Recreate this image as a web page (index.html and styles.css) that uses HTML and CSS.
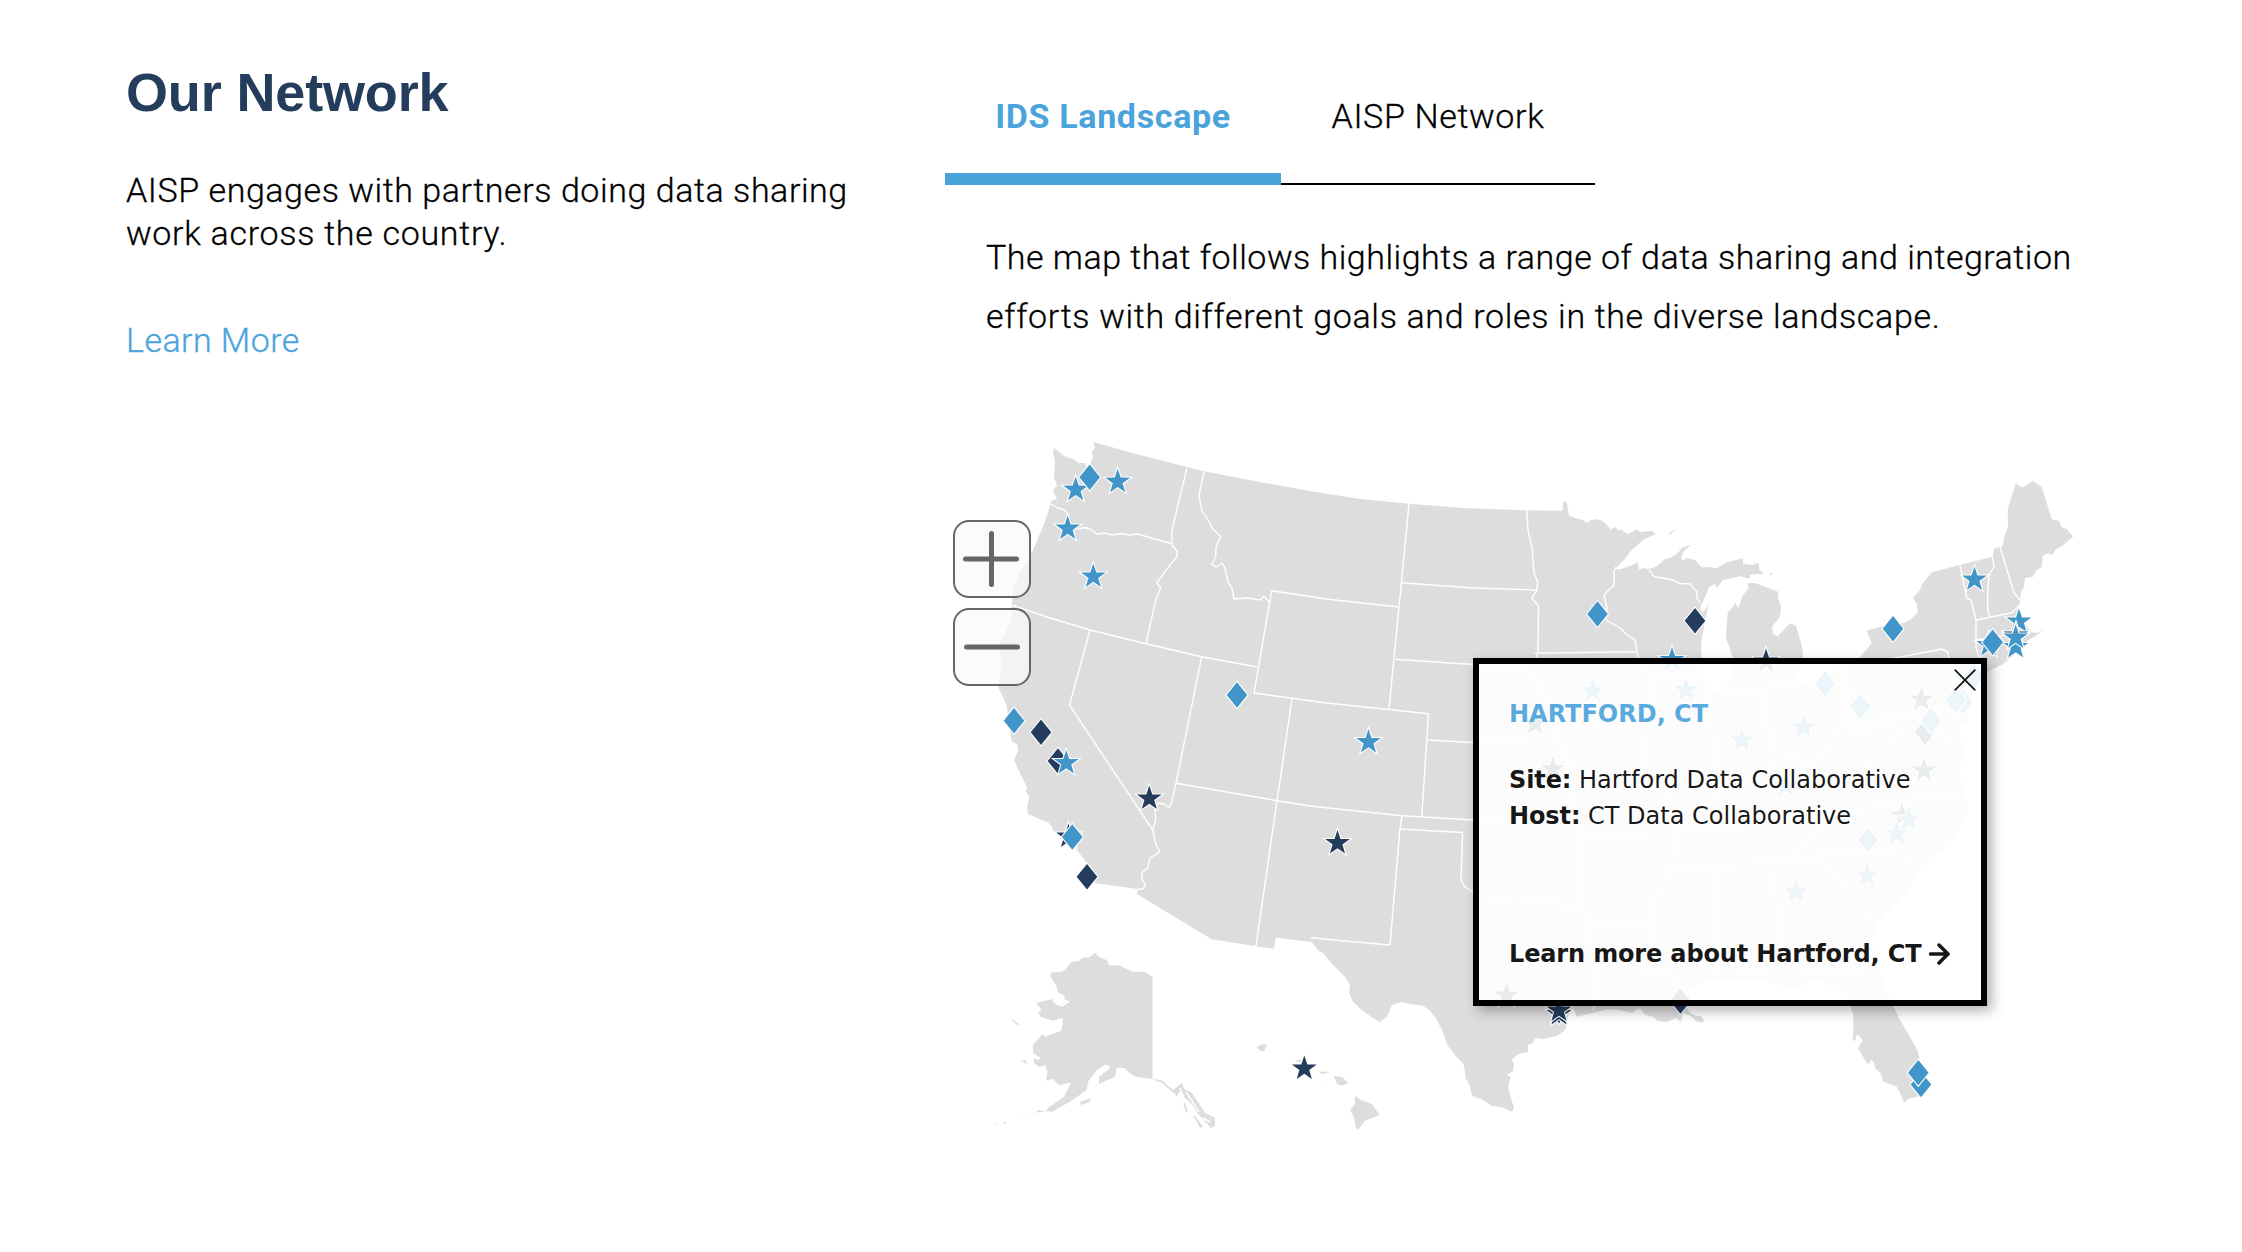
FILE: index.html
```html
<!DOCTYPE html>
<html lang="en">
<head>
  <meta charset="UTF-8" />
  <meta name="viewport" content="width=device-width, initial-scale=1.0"/>
  <title>Our Network</title>
  <link rel="stylesheet" href="styles.css">
</head>
<body>

<section class="network">
  <!-- Intro -->
  <div class="intro">
    <h2>Our Network</h2>
    <p><span class="line line-1">AISP engages with partners doing data sharing</span><br><span class="line line-2">work across the country.</span></p>
    <a class="learn-more" href="#">Learn More</a>
  </div>

  <!-- Tabs + map -->
  <div class="landscape">
    <div class="tabs">
      <a class="tab active" href="#"><span>IDS Landscape</span></a>
      <a class="tab" href="#"><span>AISP Network</span></a>
    </div>
    <p class="map-text"><span class="line line-3">The map that follows highlights a range of data sharing and integration</span><br><span class="line line-4">efforts with different goals and roles in the diverse landscape.</span></p>

    <div class="map">
      <svg class="map-svg" viewBox="945 420 1150 730" width="1150" height="730">
        <defs>
          <path id="star" d="M0-13 L3-4.1 L12.4-4 L4.9 1.6 L7.6 10.5 L0 5.2 L-7.6 10.5 L-4.9 1.6 L-12.4-4 L-3-4.1Z"/>
          <path id="diamond" d="M0-12.8 L10.3 0 L0 12.8 L-10.3 0Z"/>
        </defs>

        <g class="land">
          <!-- Lower 48 -->
          <path d="M1054 448 L1058 451 L1064 456 L1073 459 L1079 463 L1085 463 L1087 469 L1090 470 L1090 464 L1093 457 L1092 452 L1095 447 L1093 442 L1140 455 L1187 467 L1204 471.300 L1260 482 L1310 491 L1360 499 L1409 503.700 L1467 508.300 L1527 510.300 L1562.700 510.700 L1563.300 501 L1566.700 502 L1569 515.700 L1575 518 L1583 520 L1587 522.700 L1591 520 L1597 519.300 L1603 521 L1607 525 L1610.700 529.700 L1615 526.700 L1618 530 L1622 530 L1627 534 L1632 532 L1637 529.300 L1640 532 L1651.700 531 L1656 534 L1649 537 L1643 540 L1631.700 550 L1624 560 L1615 568.700 L1620 569.300 L1630 566 L1638 562.300 L1639 570 L1643 568 L1649 569.300 L1657 566 L1665 559 L1670 558 L1677.700 553.300 L1682 547.700 L1691.700 544.300 L1684 551 L1681 557 L1683 561 L1687 558 L1695 560 L1702 567.500 L1709 567 L1716.700 568.300 L1727 562.300 L1742.700 558.300 L1743.300 564 L1752 565 L1759 562.700 L1759 569.300 L1764 574.300 L1757 574 L1750 575 L1749 579 L1740 576 L1733 578 L1723 580 L1717 588.300 L1715 584 L1709 586.700 L1706 595 L1700 608 L1703 613 L1709 603 L1706.700 613 L1704 626.700 L1701 643 L1701.700 660 L1704 680 L1708 690 L1716.500 693 L1725 687 L1733 672 L1733 657.700 L1725.700 636.700 L1727.700 613 L1732 608 L1735 602.700 L1738.300 608 L1743 595 L1748 589 L1748 583 L1755 583 L1763 586 L1778 591.700 L1778 597 L1781 606.700 L1780 616.700 L1772 626.700 L1773 634 L1778 636 L1790 623.300 L1796 625.700 L1802 646.700 L1803 657.700 L1797 674 L1799 683 L1812 688 L1842 667 L1860 657.300 L1871.700 643.300 L1866.700 630.700 L1887 625 L1900 624 L1910 620 L1917.700 612.700 L1916.700 603.300 L1912.700 598.300 L1920 590 L1922 584 L1931.700 572.300 L1959.300 565 L1992.700 556.700 L1994.300 548.300 L2000 547 L2003 546 L2004.300 536.700 L2008 526.700 L2007.700 510 L2011 498 L2016 483.300 L2021.700 487.500 L2027 485 L2033 481 L2041.700 486.700 L2047 504 L2051.700 519.300 L2059 520.700 L2061.700 527.300 L2067 529.300 L2073 536.700 L2068 541 L2062 546 L2056 549 L2052 555 L2048 553 L2042.700 556 L2041.700 566.700 L2036 571 L2033 576.700 L2025 578.300 L2024 586.700 L2021 592 L2020 601.700 L2018 608 L2022 617 L2028 628 L2030.700 632 L2036.700 633.300 L2043.300 629.300 L2036 636 L2028 640 L2022 649 L2011.700 657 L2003 664 L1987 672 L1975 676 L1972 700 L1966 724 L1958 728 L1964 750 L1959 773 L1966 793 L1968 810 L1956 836.700 L1942 850 L1921.400 866.700 L1904 896.700 L1878 923 L1871.500 940 L1882 980 L1893 1006 L1900 1020 L1909 1035 L1918 1051.700 L1921.700 1073 L1918 1096.700 L1908 1099 L1904 1103 L1902 1097 L1897 1087 L1890 1084 L1883 1081.700 L1880.700 1073 L1875 1068.300 L1874 1062 L1871 1060 L1869 1064 L1866.700 1062.700 L1858 1048.300 L1862.700 1040 L1857 1034 L1855 1041 L1852.700 1040 L1853.500 1024 L1853 1013 L1849 1003 L1832 987 L1818 980 L1791 989 L1770 983 L1749 978 L1715 980 L1697 985 L1687 992 L1685 1006 L1690 1013 L1696.700 1016 L1701 1016 L1704 1020.700 L1701.700 1022.700 L1696 1021 L1691 1016 L1683 1013 L1680.700 1022 L1676.700 1018 L1667 1022 L1657 1021 L1654 1017 L1645 1015 L1640 1008 L1635 1010 L1632.700 1013.300 L1620 1010 L1606.700 1009.300 L1593 1012.700 L1576.700 1016.700 L1574 1010 L1570 1010 L1566.700 1021.700 L1568 1024 L1565 1030 L1556.700 1036 L1541.700 1039 L1535 1038 L1533 1043 L1528 1045 L1528 1052 L1518 1054 L1511.700 1060 L1514 1064 L1513 1071 L1507 1075 L1510.700 1077 L1508 1086.700 L1511 1098 L1514 1108 L1512 1111.700 L1508 1110 L1501.700 1107 L1492 1106 L1481.700 1099.300 L1472 1095.700 L1470 1086.700 L1465.700 1078 L1464 1065 L1455 1055 L1447.300 1045 L1443 1031.700 L1435 1016.700 L1428 1009 L1422.700 1005.700 L1410 1004 L1401.700 1001.700 L1392 1005 L1387 1016.700 L1380 1022 L1373 1018 L1361.700 1010 L1353 1002 L1349 993 L1350 985 L1345 976.700 L1333 965 L1323 953 L1319 951 L1311.700 942 L1275.700 937.700 L1274 948.700 L1256 946.300 L1211.700 939.300 L1136.700 894 L1138 889 L1095 883.300 L1087 863.300 L1077 850 L1062 838 L1053 831 L1052 827 L1048 822 L1041.700 820 L1035 817 L1028 814.300 L1027 808 L1029.300 796.700 L1026 792 L1027 787 L1020 773.300 L1014 760 L1018.500 750 L1017 744 L1011.700 741.700 L1009 725 L1006.700 705 L998 686.700 L1001.700 670 L1001 656.700 L997 646.700 L1005 633 L1011 620 L1011.700 605 L1014 585 L1021.700 570 L1033 550 L1045 521.700 L1050 506 L1051 500.700 L1057 499 L1053 490 L1057 486 L1054 477 L1055 460 L1053 452Z"/>
          <path d="M1668 534 L1677 528 L1670 535Z M1769 574 L1772 572 L1772 575Z"/>
          <!-- Alaska -->
          <path d="M1051.700 972.300 L1050 976 L1057 987 L1057.700 992 L1065 995.700 L1064 999 L1070 1001.700 L1062 1006.700 L1055 1004 L1052 999 L1036 1003 L1041.700 1010 L1038 1012 L1041 1017 L1053 1020.700 L1062 1018 L1063 1023 L1061 1031 L1052 1034 L1045 1036.700 L1042.700 1034 L1033 1045 L1033 1053 L1040.700 1058 L1038 1060 L1034 1058 L1034 1063 L1039 1067 L1045 1065 L1047.700 1071.700 L1045.700 1080.700 L1053 1079 L1059 1085 L1071 1082.700 L1064 1096.700 L1048 1108 L1046 1111 L1052 1111.700 L1070 1101.700 L1086.700 1090 L1088 1081.700 L1097 1070 L1105 1065 L1110 1066 L1108 1070 L1099 1076.700 L1099 1084 L1115 1076.700 L1116.700 1067.700 L1124 1068 L1131 1074 L1137 1077 L1152 1079 L1162 1083 L1177 1096 L1180 1091 L1185 1099 L1193 1106 L1198 1114 L1205 1121 L1211 1128 L1215 1126 L1215 1118 L1205 1112.700 L1192 1093 L1184 1089 L1182 1083 L1173 1090 L1162 1080.500 L1152.500 1079 V977 L1145 971.700 L1133 971.700 L1120 965.700 L1109 965 L1106.700 960 L1099 957 L1095 952.700 L1090 957 L1082 958 L1079 961 L1071.700 961.700 L1065 970 L1060 972Z"/>
          <path d="M1010 1018 L1015 1021 L1021 1026 L1016 1024Z M1021 1061 L1026 1060 L1027 1064Z M1080 1102 L1091 1098 L1090 1102 L1081 1105Z M1029 1116 L1039 1110 L1046 1112 L1037 1112Z M1018 1119 L1024 1117 L1020 1118Z M993 1125 L998 1123 L995 1125Z M1003 1122 L1007 1122 L1005 1124Z M1195 1118 L1203 1126 L1200 1128Z M1184 1104 L1188 1113 L1186 1112Z"/>
          <path class="channels" d="M1184 1095 L1191 1104 M1189 1092 L1196 1103 M1194 1116 L1202 1127 M1184 1103 L1187 1112"/>
          <path class="inlets" d="M1180 1088 L1184 1098 L1192 1105 M1186 1092 L1192 1101 L1199 1112 M1203 1118 L1210 1122"/>
          <!-- Hawaii -->
          <path d="M1257 1047 L1263 1044 L1267 1045 L1264 1051.500 L1259 1050Z M1294 1062 L1300 1059 L1302 1062Z M1318 1071.500 L1330 1072 L1322 1074Z M1325 1079 L1328 1082 L1326 1081Z M1334 1076 L1342 1077 L1348.500 1083 L1342 1085.700 L1337 1084Z M1355 1096 L1361 1100 L1372 1104 L1379.500 1115 L1365 1121 L1358 1130 L1355.700 1128 L1354 1117 L1350 1110 L1355 1104Z"/>
        </g>

        <!-- State borders -->
        <g class="borders">
          <path d="M1050.700 504 L1058 508 L1065 510 L1068 515 L1070 525 L1079 529 L1085 527.500 L1090 529 L1097 534 L1104 533 L1112 535 L1120 533.500 L1130 535 L1137 534 L1171 543.500"/>
          <path d="M1187 468 L1176.700 510 L1171.700 532.700 L1172 545 L1177.500 552 L1176 558 L1170 565 L1164 573 L1156.700 583 L1160.700 588 L1155.700 600 L1146 643.300"/>
          <path d="M1012 605 L1050 618 L1090 630 L1146 643.700 L1201.700 656.700 L1257 667"/>
          <path d="M1090 630 L1069.500 705 L1152.700 830 L1156 845 L1160 851.700 L1150 858 L1147.700 868 L1142 872.700 L1141.700 880 L1145.700 884 L1143 889 L1138 889"/>
          <path d="M1152.700 830 L1155.700 820 L1155 808 L1158 803 L1164 804 L1169 807.700 L1171.700 801.700 L1176 783.300 L1201.700 656.700"/>
          <path d="M1176 783.300 L1226.700 792 L1277 800.700 L1310 806 L1402 815.700 L1473 820 L1575 821"/>
          <path d="M1204 471.300 L1199 495 L1201.700 510 L1208 520 L1213 529 L1220.700 537 L1216 546.700 L1215.700 557 L1211.700 564 L1216 567 L1222 563 L1225 568 L1228 582 L1232 588 L1234 599 L1247 598 L1260 600 L1264 596 L1269 602"/>
          <path d="M1271.700 590.700 L1330 599.500 L1399 607 M1271.700 590.700 L1254 693 L1327 703 L1389 709.500 L1428.500 713.700 L1421.700 816.700"/>
          <path d="M1292 699 L1277 800.700 L1256 946 M1409 503.700 L1399 607 L1389 709.500"/>
          <path d="M1402 582.700 L1473 588 L1537 590 M1395 659.300 L1473 664.500 L1500 666 L1508 671 L1523 668 L1535 678 L1545 697 L1550 720 L1562 743 L1568 750 L1567 760 L1575 767 V821"/>
          <path d="M1526.700 510 L1528 530 L1532 548 L1534 573 L1537.700 582 L1536.700 590.700 L1531.700 598 L1538.500 606 L1538 653 L1535 660 L1536 668 L1535 678 M1535 653.300 L1637 651.700"/>
          <path d="M1427 740 L1473 742.500 L1563 744 M1402 815.700 L1400 828.300 L1390 945 L1350 941.500 L1311 937.700"/>
          <path d="M1400 829 L1462.500 832.500 L1461 880 L1465 887 L1477 895 L1494 897 L1512 905 L1532 902 L1556 902 L1574 910 L1588 912 L1590 945 L1597.700 963 L1599.500 993 L1593 1010"/>
          <path d="M1577 821 L1579 835 V907 M1579 835 L1665 831.700 M1590 925 L1651 923"/>
          <path d="M1616 567 L1614 571 V585 L1604 595 L1607 608 L1606 620 L1621.700 629 L1626 634 L1635 640 L1637 652 L1642 670 L1650 677 L1656 683 L1653 700 L1636 723 L1642.500 740 L1648 767 L1667 787 L1679 827 L1673.500 853 L1670 873 L1656 897 L1651 923 L1647.700 953 L1642.500 973 H1672 L1680 993"/>
          <path d="M1649 570 L1654 576.500 L1673 580 L1680 583.500 L1690 584 L1697 591.700 V598 L1700 603 M1650 677 L1700 673 M1553 728 L1632 727"/>
          <path d="M1708 690 L1715 767 L1704.500 797 L1697.600 813 M1679 827 L1708 807 L1722 790 L1746 783 L1770 763 L1791 757 L1808 763 L1822 757 L1839 730 L1846 717 L1842 667"/>
          <path d="M1763 688 L1771.600 757 M1716.500 692 L1799 685 M1679 829 L1780 822 L1839 813 L1959 792 M1670 870 L1770 862 L1822 855 L1856 849 L1877 850 L1890 849 L1921 867"/>
          <path d="M1816 857 L1849 893 L1878 923 M1766.500 863 L1780 917 L1783.700 963 M1732 970 L1784 968 L1859.500 970 L1873 960 M1714 867 L1713 977"/>
          <path d="M1846 667 L1852.600 726 L1945 707 L1960 720 M1852 726 L1853 732 L1873 728 L1880 725 L1904 730 L1884 753 L1866 767 L1849 780 L1825 784 M1794 853 L1815 833 L1839 813"/>
          <path d="M1862 663 L1900 657 L1941.700 649 L1948 652 L1949 659 L1960 672 M1929 710 L1950 745"/>
          <path d="M1960 565 L1963 580 L1966.700 598 L1971 600 L1976 620 V647 L1979 657 M1992.700 557 L1994 567 L1989 575 L1987.700 590 V610 L1990 617 M1976.700 620 L2011.700 612.700 L2019 606 M2000 547 L2007 570 L2014 592.700 L2020 600 M1976 640 L2002 635.700 L2012 633"/>
        </g>

        <!-- Sites -->
        <g class="sites">
          <use href="#star" class="light" x="1075.700" y="489.700"/>
          <use href="#diamond" class="light" x="1089.700" y="477.300"/>
          <use href="#star" class="light" x="1117.700" y="481.700"/>
          <use href="#star" class="light" x="1067.700" y="528.500"/>
          <use href="#star" class="light" x="1093.300" y="576.500"/>
          <use href="#diamond" class="light" x="1237" y="695"/>
          <use href="#diamond" class="light" x="1014" y="720.700"/>
          <use href="#diamond" class="dark" x="1041" y="732.300"/>
          <use href="#diamond" class="dark" x="1058" y="761"/>
          <use href="#star" class="light" x="1066.300" y="763"/>
          <use href="#star" class="dark" x="1149.300" y="798.500"/>
          <use href="#star" class="dark" x="1068.500" y="836.500"/>
          <use href="#diamond" class="light" x="1072.300" y="837"/>
          <use href="#diamond" class="dark" x="1087" y="876.700"/>
          <use href="#star" class="light" x="1368.500" y="742"/>
          <use href="#star" class="dark" x="1337.500" y="843"/>
          <use href="#diamond" class="light" x="1597.500" y="614"/>
          <use href="#diamond" class="dark" x="1695" y="620.700"/>
          <use href="#star" class="light" x="1672" y="660"/>
          <use href="#star" class="dark" x="1766" y="661.500"/>
          <use href="#star" class="light" x="1974.500" y="579.500"/>
          <use href="#diamond" class="light" x="1893" y="628.700"/>
          <use href="#star" class="light" x="2019" y="621.500"/>
          <use href="#star" class="dark" x="2016" y="635.500"/>
          <use href="#star" class="light" x="2015.700" y="647"/>
          <use href="#star" class="light" x="2015.700" y="637.500"/>
          <use href="#star" class="light" x="1988.700" y="645"/>
          <use href="#diamond" class="light" x="1992.700" y="642.300"/>
          <use href="#star" class="light" x="1592.600" y="691"/>
          <use href="#star" class="light" x="1686" y="690"/>
          <use href="#star" class="dark" x="1921.500" y="699.500"/>
          <use href="#star" class="dark" x="1535" y="723.500"/>
          <use href="#star" class="light" x="1741.700" y="740.500"/>
          <use href="#star" class="light" x="1803.500" y="727.500"/>
          <use href="#star" class="dark" x="1553" y="769"/>
          <use href="#star" class="light" x="1786" y="785.500"/>
          <use href="#star" class="dark" x="1924" y="770.500"/>
          <use href="#star" class="dark" x="1902" y="815.500"/>
          <use href="#star" class="light" x="1908.700" y="819.500"/>
          <use href="#star" class="light" x="1896.500" y="834"/>
          <use href="#diamond" class="light" x="1868" y="840"/>
          <use href="#star" class="light" x="1867" y="875.500"/>
          <use href="#star" class="light" x="1796" y="891.500"/>
          <use href="#star" class="dark" x="1506.500" y="995.500"/>
          <use href="#diamond" class="dark" x="1559" y="1010.500"/>
          <use href="#star" class="dark" x="1559" y="1014"/>
          <use href="#star" class="dark" x="1559" y="1010.500"/>
          <use href="#diamond" class="dark" x="1680.400" y="1001"/>
          <use href="#diamond" class="light" x="1825" y="684"/>
          <use href="#diamond" class="light" x="1860.500" y="706.500"/>
          <use href="#diamond" class="light" x="1962.500" y="701.700"/>
          <use href="#diamond" class="light" x="1956" y="700"/>
          <use href="#diamond" class="dark" x="1925" y="732"/>
          <use href="#diamond" class="light" x="1931" y="721"/>
          <use href="#star" class="light" x="1967" y="680"/>
          <use href="#diamond" class="light" x="1974" y="676"/>
          <use href="#diamond" class="light" x="1921" y="1084.500"/>
          <use href="#diamond" class="light" x="1918.300" y="1072.800"/>
          <use href="#star" class="dark" x="1304.300" y="1068.500"/>
        </g>
      </svg>

      <!-- Zoom controls -->
      <div class="zoom">
        <button type="button" aria-label="Zoom in"><svg width="60" height="60" viewBox="0 0 60 60"><path d="M3.500 30h51M29.500 4.500v51"/></svg></button>
        <button type="button" aria-label="Zoom out"><svg width="60" height="60" viewBox="0 0 60 60"><path d="M4.500 30h51"/></svg></button>
      </div>

      <!-- Site popup -->
      <div class="popup">
        <svg class="close" width="22" height="22" viewBox="0 0 22 22"><path d="M.7.700l20.600 20.600M21.300.700L.7 21.300"/></svg>
        <h3>HARTFORD, CT</h3>
        <p class="site"><b>Site:</b> Hartford Data Collaborative</p>
        <p class="host"><b>Host:</b> CT Data Collaborative</p>
        <a class="popup-link" href="#"><span>Learn more about Hartford, CT</span><svg width="21" height="22" viewBox="0 0 21 22"><path d="M1.500 11h17M10 2l9 9-9 9"/></svg></a>
      </div>
    </div>
  </div>
</section>

</body>
</html>
```
FILE: styles.css
```css
* {
  box-sizing: border-box;
}

body {
  margin: 0;
  background: #fff;
  color: #000;
  font-family: Roboto, 'Open Sans', sans-serif;
  font-weight: 300;
  font-size: 34px;
}

h2, h3, p {
  margin: 0;
}

a {
  color: inherit;
  text-decoration: none;
}

.network {
  display: flex;
  height: 1252px;
  padding-left: 126px;
  overflow: hidden;
}

.intro {
  width: 819px;
  padding-top: 61px;
}

.intro h2 {
  font-family: 'Liberation Sans', Arial, sans-serif;
  font-size: 54px;
  font-weight: 700;
  line-height: 62px;
  letter-spacing: -0.15px;
  color: #243d5c;
}

.intro p {
  margin-top: 46px;
  line-height: 43px;
}

.line,
.learn-more {
  white-space: nowrap;
  -webkit-text-stroke: 0.3px currentColor;
}

.line-1 {
  letter-spacing: 0.56px;
}

.line-2 {
  letter-spacing: 0.7px;
}

.line-3 {
  letter-spacing: 0.49px;
}

.line-4 {
  letter-spacing: 0.66px;
}

.learn-more {
  display: block;
  margin-top: 64px;
  line-height: 43px;
  letter-spacing: 0.45px;
  color: #4ba3dc;
}

.landscape {
  width: 1150px;
}

.tabs {
  display: flex;
  height: 185px;
}

.tab {
  width: 314px;
  padding-top: 95px;
  line-height: 42px;
  letter-spacing: 0.65px;
  text-align: center;
  white-space: nowrap;
  border-bottom: 2px solid #000;
  -webkit-text-stroke: 0.3px currentColor;
}

.tab.active {
  width: 336px;
  font-weight: 700;
  color: #4ba3dc;
  border-bottom: 12px solid #4ba3dc;
  -webkit-text-stroke: 0;
}

.map-text {
  height: 235px;
  padding: 43px 0 0 41px;
  line-height: 59px;
}

/* Map */
.map {
  position: relative;
}

.map-svg {
  display: block;
}

.land {
  fill: #ddd;
}

.channels {
  fill: none;
  stroke: #ddd;
  stroke-width: 2;
}

.inlets {
  fill: none;
  stroke: #fff;
  stroke-width: 1.5;
}

.borders {
  fill: none;
  stroke: #fff;
  stroke-width: 1.4;
  stroke-linejoin: round;
}

/* white outline sits behind the marker fill */
.sites use {
  stroke: #fff;
  stroke-width: 2.2;
  paint-order: stroke;
}

.light {
  fill: #4295c8;
}

.dark {
  fill: #243d5c;
}

.zoom {
  position: absolute;
  left: 8px;
  top: 100px;
  display: flex;
  flex-direction: column;
  gap: 10px;
}

.zoom button {
  display: flex;
  align-items: center;
  justify-content: center;
  width: 78px;
  height: 78px;
  padding: 0;
  border: 2px solid #666;
  border-radius: 16px;
  background: rgba(250, 250, 250, 0.75);
}

.zoom path {
  stroke: #666;
  stroke-width: 5;
  stroke-linecap: round;
}

.popup {
  position: absolute;
  left: 528px;
  top: 238px;
  width: 514px;
  height: 348px;
  padding: 32px 0 0 30px;
  border: 6px solid #000;
  background: rgba(255, 255, 255, 0.9);
  box-shadow: 5px 5px 12px rgba(0, 0, 0, 0.3);
  font-family: 'DejaVu Sans', Verdana, sans-serif;
  font-size: 24px;
  font-weight: 400;
  line-height: 36px;
  color: rgba(0, 0, 0, 0.91);
  white-space: nowrap;
}

.popup h3 {
  margin-bottom: 30px;
  font-size: 24px;
  line-height: 36px;
  color: rgba(60, 155, 218, 0.85);
}

.popup b {
  font-weight: 700;
  letter-spacing: -0.1px;
}

.popup-link {
  display: flex;
  align-items: center;
  gap: 8px;
  margin-top: 102px;
  font-weight: 700;
  letter-spacing: -0.15px;
}

.popup-link path {
  fill: none;
  stroke: #161616;
  stroke-width: 3.5;
  stroke-linecap: round;
}

.close {
  position: absolute;
  right: 5px;
  top: 5px;
}

.close path {
  stroke: #161616;
  stroke-width: 1.8;
}
```
